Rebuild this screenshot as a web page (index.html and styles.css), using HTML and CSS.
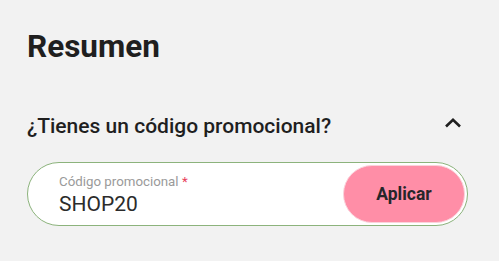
FILE: index.html
```html
<!DOCTYPE html>
<html lang="es">
<head>
  <meta charset="UTF-8">
  <meta name="viewport" content="width=device-width, initial-scale=1.0">
  <title>Resumen</title>
  <link rel="stylesheet" href="styles.css">
</head>
<body>

  <div class="summary">
    <h2 class="title">Resumen</h2>

    <div class="promo-head">
      <span>¿Tienes un código promocional?</span>
      <svg class="chevron" width="18" height="10" viewBox="0 0 18 10">
        <polyline points="2,8.5 9,1.8 16,8.5" fill="none" stroke="#1f1f1f" stroke-width="2.6" />
      </svg>
    </div>

    <div class="promo-box">
      <label class="field">
        <span class="field-label">Código promocional <span class="req">*</span></span>
        <span class="field-value">SHOP20</span>
      </label>
      <button class="apply-btn">Aplicar</button>
    </div>
  </div>

</body>
</html>
```

FILE: styles.css
```css
body {
  font-family: Roboto, 'Liberation Sans', sans-serif;
  margin: 0;
  background-color: #f2f2f2;
  color: #1f1f1f;
}

.summary {
  padding: 29px 31px 0 27px;
}

.title {
  margin: 0;
  font-size: 31.5px;
  line-height: 36px;
  font-weight: 700;
}

.promo-head {
  display: flex;
  justify-content: space-between;
  align-items: center;
  margin-top: 49px;
  font-size: 21px;
  line-height: 24px;
  font-weight: 500;
}

.chevron {
  margin-right: 6px;
  margin-bottom: 6px;
}

.promo-box {
  display: flex;
  align-items: center;
  margin-top: 24px;
  height: 62px;
  padding: 0 2px 0 0;
  border: 1px solid #8cb37c;
  border-radius: 32px;
  background: #ffffff;
}

.field {
  flex: 1;
  display: flex;
  flex-direction: column;
  padding-left: 31px;
  padding-top: 1px;
}

.field-label {
  font-size: 13.3px;
  line-height: 16px;
  color: #9a9a9a;
}

.req {
  color: #e8415a;
}

.field-value {
  margin-top: 2px;
  font-size: 21px;
  line-height: 24px;
  color: #2b2b2b;
}

.apply-btn {
  width: 122px;
  height: 58px;
  border: 1px solid #fbd3dc;
  border-radius: 29px;
  background: #ff8ea7;
  color: #26262a;
  font-family: Roboto, 'Liberation Sans', sans-serif;
  font-size: 17.5px;
  font-weight: 700;
  cursor: pointer;
}
```
